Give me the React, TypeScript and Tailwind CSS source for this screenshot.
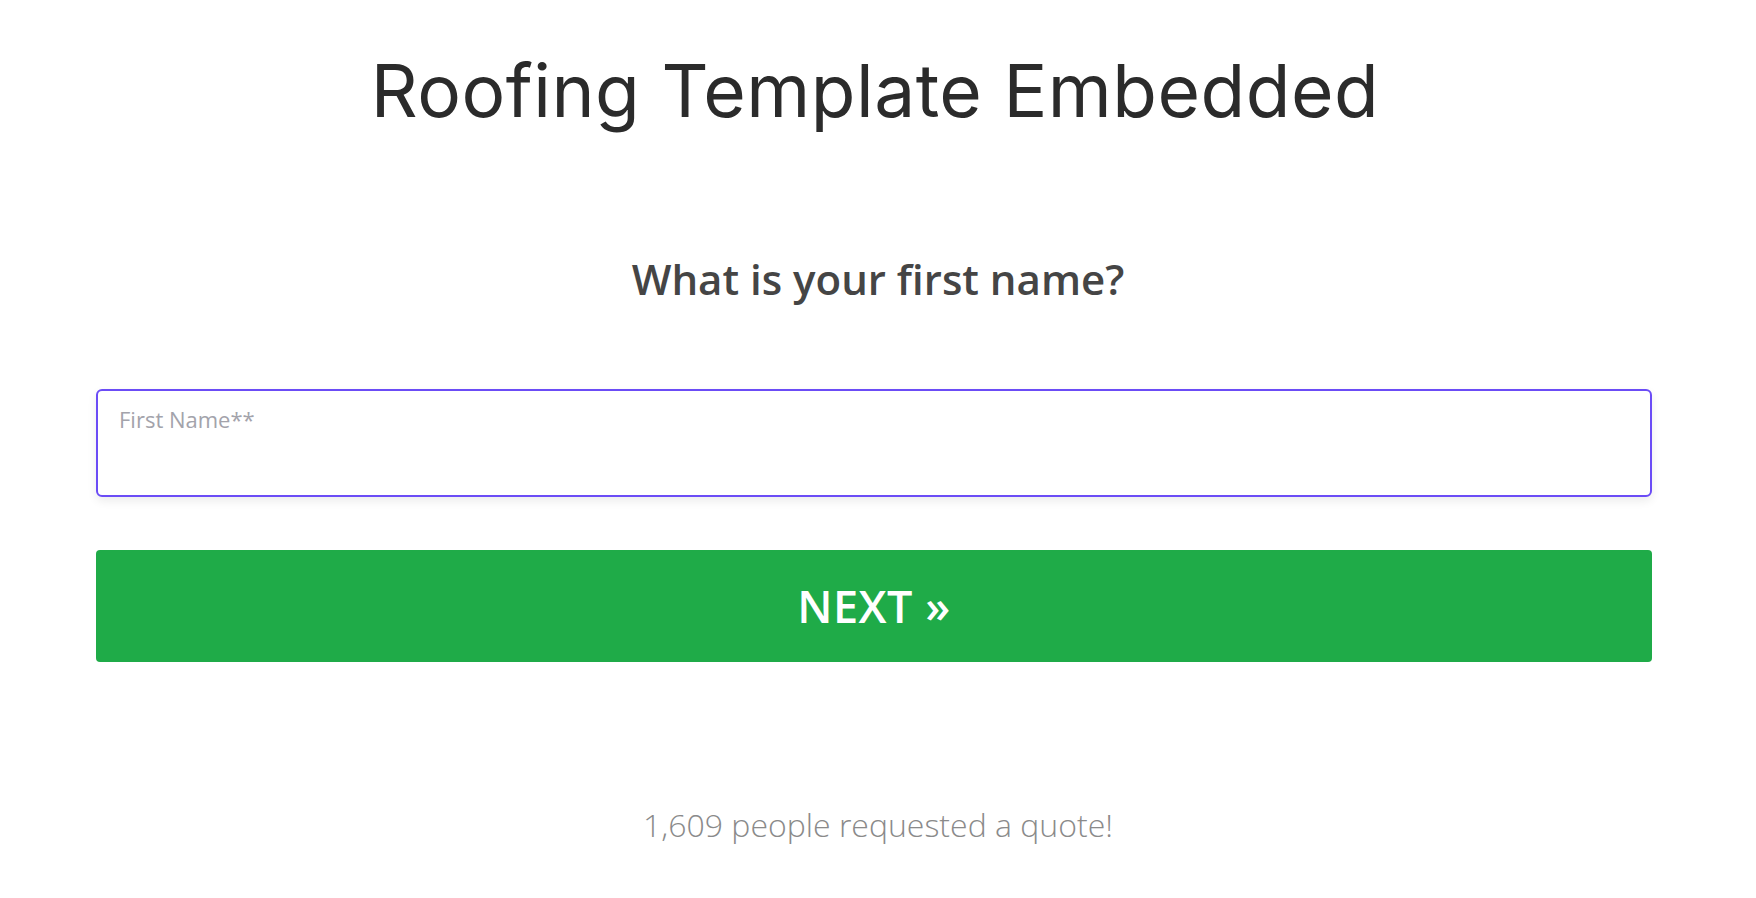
export default function App() {
  return (
    <div className="min-h-[898px] w-full bg-white font-['Open_Sans','Lato',sans-serif]">
      <h1 className="pt-[43px] pr-[6px] text-center font-['Inter',sans-serif] text-[73px] font-normal leading-[96px] tracking-[0.5px] text-[#2b2b2b]">
        Roofing Template Embedded
      </h1>

      <h2 className="mt-[112px] text-center text-[42px] font-semibold leading-[56px] text-[#454545]">
        What is your first name?
      </h2>

      <div className="mt-[82px] pl-[96px] pr-[104px]">
        <label className="block h-[108px] rounded-[6px] border-2 border-[#6b4cf6] bg-white px-[21px] pt-[13px] shadow-[0_4px_10px_rgba(0,0,0,0.08)]">
          <span className="block text-[22px] leading-[30px] text-[#a3a3ab]">First Name**</span>
          <input className="mt-[4px] w-full bg-transparent text-[22px] outline-none" />
        </label>

        <button className="mt-[53px] flex h-[112px] w-full items-center justify-center rounded-[4px] bg-[#1fab48] text-[45px] font-semibold tracking-[0.5px] text-white">
          NEXT »
        </button>
      </div>

      <p className="mt-[143px] text-center text-[32px] font-light leading-[40px] text-[#8a8a8a]">
        1,609 people requested a quote!
      </p>
    </div>
  );
}
